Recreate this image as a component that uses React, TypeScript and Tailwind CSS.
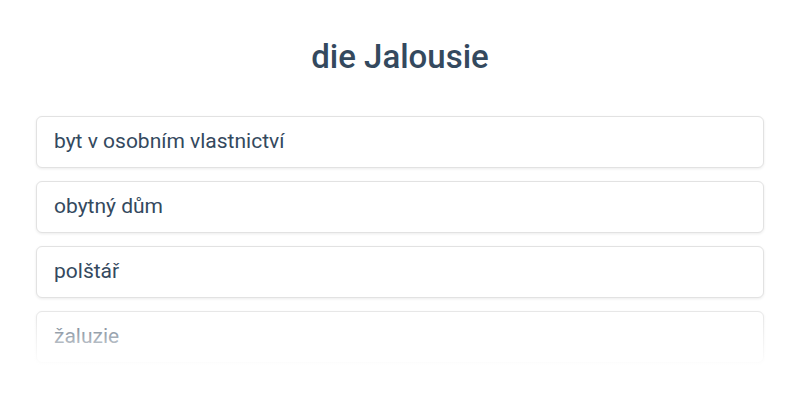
const options = [
  "byt v osobním vlastnictví",
  "obytný dům",
  "polštář",
  "žaluzie",
];

export default function App() {
  return (
    <div className="relative w-[800px] h-[400px] overflow-hidden bg-white font-['Roboto',sans-serif]">
      <div className="px-[36px] pt-[37px]">
        <h1 className="text-center text-[33px] leading-[40px] font-medium text-[#34495e]">
          die Jalousie
        </h1>

        <div className="mt-[39px] flex flex-col gap-[13px]">
          {options.map((opt) => (
            <button
              key={opt}
              type="button"
              className="h-[52px] w-full rounded-[6px] border border-[#e2e2e2] bg-white px-[17px] text-left text-[21px] text-[#34495e] shadow-[0_1px_3px_rgba(0,0,0,0.08)]"
            >
              {opt}
            </button>
          ))}
        </div>
      </div>

      {/* fade out the bottom of the list */}
      <div className="pointer-events-none absolute left-0 right-0 top-[300px] h-[68px] bg-gradient-to-b from-white/0 to-white" />
      <div className="pointer-events-none absolute left-0 right-0 top-[367px] bottom-0 bg-white" />
    </div>
  );
}
